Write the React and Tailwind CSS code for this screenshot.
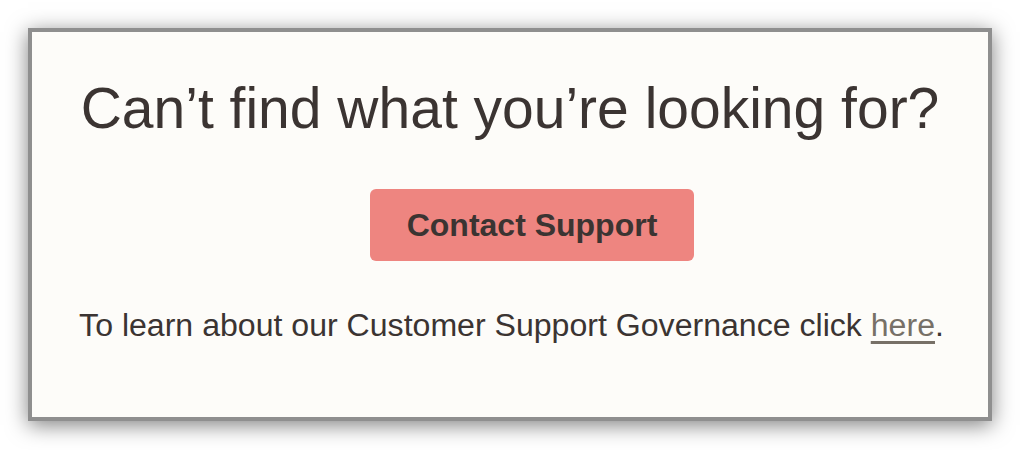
export default function App() {
  return (
    <div className="min-h-[450px] w-full bg-white pt-[28px] font-['Liberation_Sans',Arial,sans-serif]">
      <div className="mx-auto box-border h-[393px] w-[964px] border-4 border-[#8f8f8f] bg-[#fdfcf9] shadow-[0_4px_20px_rgba(0,0,0,0.5)]">
        <div className="flex flex-col items-center pt-[48px]">
          <h1 className="text-[57px] leading-none font-normal text-[#3b3432]">
            Can’t find what you’re looking for?
          </h1>

          <button
            type="button"
            className="ml-[44px] mt-[52px] flex h-[72px] w-[324px] items-center justify-center rounded-[6px] bg-[#ee8580] text-[32px] leading-none font-bold text-[#3b3432]"
          >
            Contact Support
          </button>

          <p className="ml-[3px] mt-[48px] text-[32.1px] leading-none text-[#3b3432]">
            To learn about our Customer Support Governance click{' '}
            <a href="#" className="text-[#777067] underline decoration-[3px] underline-offset-[5px]">
              here
            </a>
            .
          </p>
        </div>
      </div>
    </div>
  )
}
